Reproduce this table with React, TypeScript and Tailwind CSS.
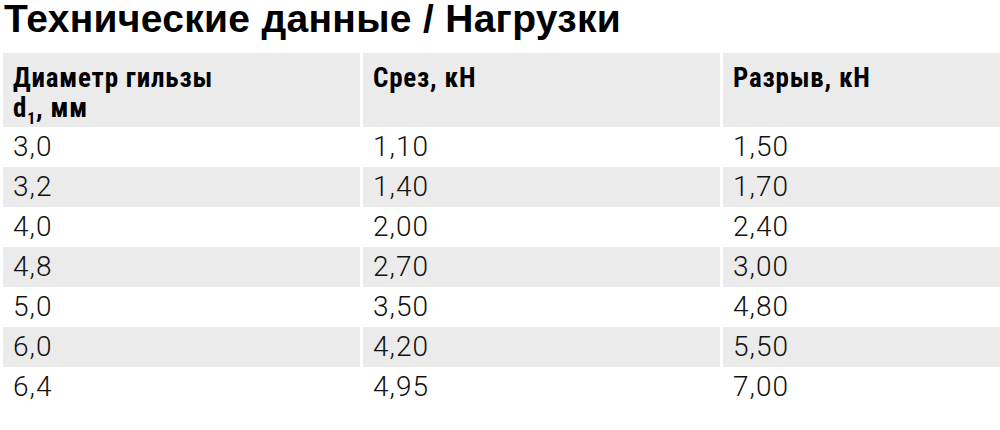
import React from 'react';

// Load table rows: diameter, shear, tensile
const rows: [string, string, string][] = [
  ['3,0', '1,10', '1,50'],
  ['3,2', '1,40', '1,70'],
  ['4,0', '2,00', '2,40'],
  ['4,8', '2,70', '3,00'],
  ['5,0', '3,50', '4,80'],
  ['6,0', '4,20', '5,50'],
  ['6,4', '4,95', '7,00'],
];

const headCell =
  "h-[74px] bg-[#ebebeb] px-[10px] pt-[10px] text-[27px] leading-[30px] tracking-[0.8px] font-bold font-[family-name:'Roboto_Condensed','Liberation_Sans',sans-serif]";

export default function App() {
  return (
    <div className="w-[1000px] h-[430px] overflow-hidden bg-white text-black font-[family-name:'Liberation_Sans',Arial,sans-serif]">
      <h1 className="-mt-[3px] pl-[4px] text-[39px] leading-[44px] tracking-[0.3px] font-bold">
        Технические данные / Нагрузки
      </h1>
      <div className="mt-[12px] pl-[3px] grid grid-cols-[357px_357px_1fr] gap-x-[3px]">
        <div className={headCell}>
          Диаметр гильзы
          <br />
          d<sub className="text-[16px] align-[-3px]">1</sub>, мм
        </div>
        <div className={headCell}>Срез, кН</div>
        <div className={headCell}>Разрыв, кН</div>
        {rows.map((r, i) =>
          r.map((v, j) => (
            <div
              key={`${i}-${j}`}
              className={`h-[40px] px-[10px] text-[28px] leading-[40px] tracking-[1px] font-light text-[#111] font-[family-name:Roboto,'Liberation_Sans',sans-serif] ${
                i % 2 === 1 ? 'bg-[#ebebeb]' : 'bg-white'
              }`}
            >
              {v}
            </div>
          ))
        )}
      </div>
    </div>
  );
}
